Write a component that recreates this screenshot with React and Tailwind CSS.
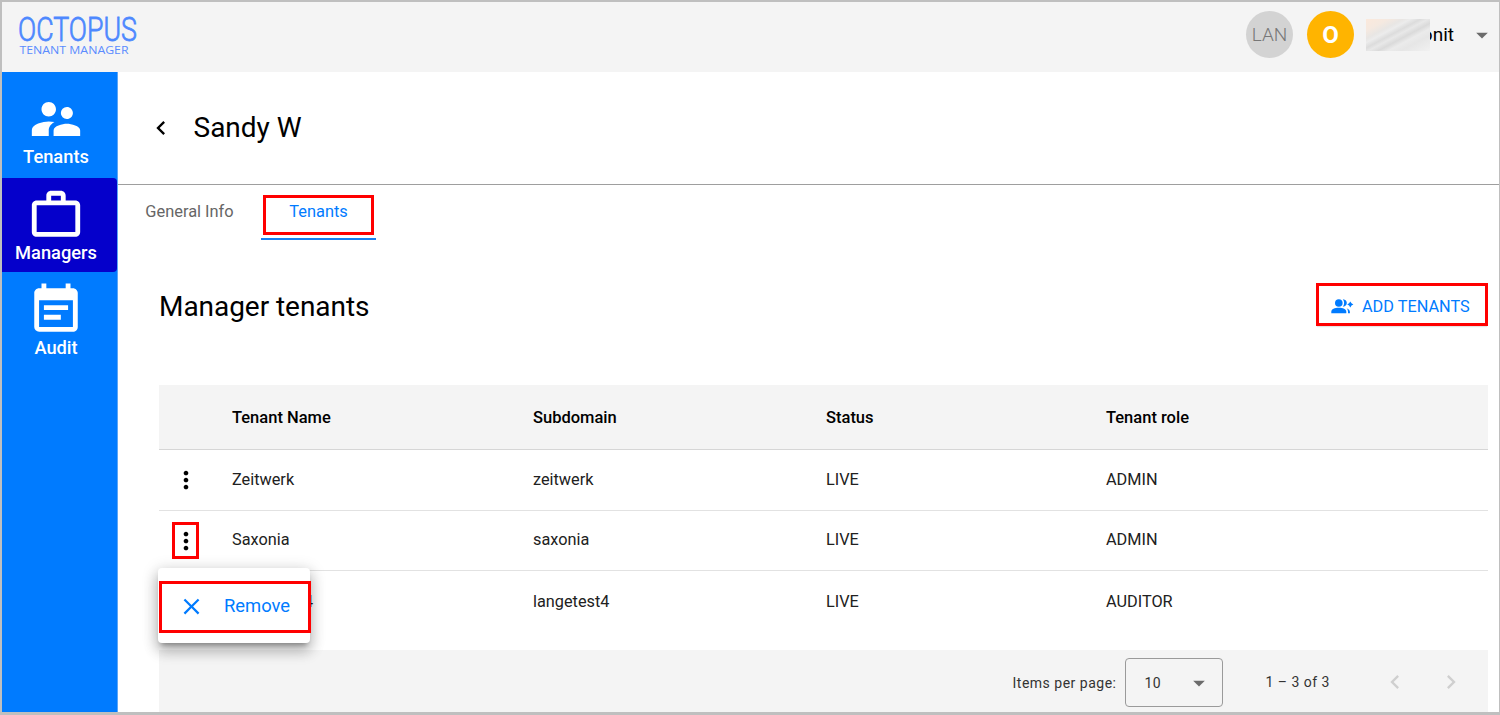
import React, { useState } from "react";
import {
  MdSupervisorAccount,
  MdWorkOutline,
  MdEventNote,
  MdChevronLeft,
  MdChevronRight,
  MdMoreVert,
  MdClose,
  MdArrowDropDown,
} from "react-icons/md";

const tenants = [
  { name: "Zeitwerk", subdomain: "zeitwerk", status: "LIVE", role: "ADMIN" },
  { name: "Saxonia", subdomain: "saxonia", status: "LIVE", role: "ADMIN" },
  { name: "Langetest4", subdomain: "langetest4", status: "LIVE", role: "AUDITOR" },
];

const Logo = () => (
  <svg width="124" height="44" viewBox="0 0 124 44" className="block overflow-visible">
    <text
      x="-1"
      y="26"
      fontFamily="Roboto"
      fontSize="34"
      fontWeight="300"
      fill="#4d88ff"
      stroke="#4d88ff"
      strokeWidth="0.8"
      textLength="119"
      lengthAdjust="spacingAndGlyphs"
    >
      OCTOPUS
    </text>
    <text
      x="0.5"
      y="39"
      fontFamily="Open Sans"
      fontSize="11.5"
      fill="#5b8cff"
      textLength="109"
      lengthAdjust="spacingAndGlyphs"
    >
      TENANT MANAGER
    </text>
  </svg>
);

const AddUserIcon = () => (
  <svg width="23" height="16" viewBox="0 0 23 16" fill="#007bff" className="block">
    <circle cx="7.8" cy="4" r="3.8" />
    <path d="M0.3 14.300v-1.600c0-2.600 3.400-3.900 7.500-3.900s7.500 1.300 7.500 3.900v1.600z" />
    <path d="M11.800 0.300c3 .3 4 2 4 3.700s-1 3.400-4 3.700c1.800-2 1.800-5.400 0-7.400z" />
    <path d="M15.600 9.200c2.100.8 3.300 2 3.300 3.700v1.400h-1.900v-1.400c0-1.500-.4-2.700-1.400-3.700z" />
    <path d="M19.300 2.400l1.200 1.800 1.900 1.200-1.900 1.200-1.200 1.800-1.200-1.800-1.900-1.200 1.900-1.200z" />
  </svg>
);

const Header = () => (
  <header className="flex h-[70px] shrink-0 items-center justify-between bg-[#f4f4f4] pl-[17px] pr-[3px]">
    <Logo />
    <div className="flex items-center pb-[5px]">
      <div className="flex h-[47px] w-[47px] items-center justify-center rounded-full bg-[#d3d3d3] pt-[2px] text-[19px] font-light text-[#777]">
        LAN
      </div>
      <div className="ml-[14px] flex h-[47px] w-[47px] items-center justify-center rounded-full bg-[#ffb400] pt-px text-[24px] font-bold text-white">
        O
      </div>
      <div className="relative ml-3 flex h-8 w-[88px] items-center justify-end pt-[2px] text-[19px] text-black">
        <span>onit</span>
        <span className="absolute left-0 top-0 h-8 w-16 bg-[linear-gradient(152deg,#fbe9dc_0%,#f5e9e0_18%,#e8e6e4_30%,#ececec_36%,#dcdcdc_44%,#e8e8e8_50%,#dadada_58%,#ebebeb_66%,#e6e6e6_76%,#f1f1f1_100%)]" />
      </div>
      <MdArrowDropDown className="ml-[14px] h-7 w-7 text-[#6b6b6b]" />
    </div>
  </header>
);

const Sidebar = () => (
  <nav className="flex w-[116px] shrink-0 flex-col border-r border-[#5ba6f7] bg-[#007bff] text-[18.3px] font-medium leading-[22px] text-white">
    <a className="flex h-[106px] flex-col items-center pr-[7px] pt-[18px]">
      <MdSupervisorAccount className="h-[58px] w-[58px] shrink-0" />
      <span className="-mt-[2px]">Tenants</span>
    </a>
    <a className="flex h-[94px] flex-col items-center rounded-r bg-[#0500cb] pr-[7px] pt-[8px]">
      <MdWorkOutline className="h-[58px] w-[58px] shrink-0" />
      <span className="-mt-[2px]">Managers</span>
    </a>
    <a className="flex h-[96px] flex-col items-center pr-[7px] pt-[9px]">
      <MdEventNote className="h-[58px] w-[58px] shrink-0" />
      <span className="-mt-[2px]">Audit</span>
    </a>
  </nav>
);

const RowMenu = () => (
  <div className="absolute left-[-14px] top-[46px] z-10 flex h-[75px] w-[152px] items-center rounded bg-white shadow-[0_5px_5px_-3px_rgba(0,0,0,0.3),0_8px_14px_1px_rgba(0,0,0,0.2),0_3px_16px_2px_rgba(0,0,0,0.14)]">
    <button className="ml-[1px] mt-[3px] flex h-[52px] w-[152px] shrink-0 items-center border-[3px] border-[#ff0000] pb-[2px] pl-[16px] text-[18.4px] text-[#007bff]">
      <MdClose className="h-[27px] w-[27px]" />
      <span className="ml-[19px]">Remove</span>
    </button>
  </div>
);

const TenantsTable = () => {
  const [openRow] = useState(1);

  return (
    <div className="text-[16.3px] text-[#212121]">
      <div className="grid h-[65px] grid-cols-[73px_301px_293px_280px_1fr] items-center border-b border-[#d6d6d6] bg-[#f4f4f4] pt-[2px] text-[16.5px] font-medium text-black">
        <span />
        <span>Tenant Name</span>
        <span>Subdomain</span>
        <span>Status</span>
        <span>Tenant role</span>
      </div>
      {tenants.map((tenant, i) => (
        <div
          key={tenant.name}
          className={
            i === tenants.length - 1
              ? "grid h-[79px] grid-cols-[73px_301px_293px_280px_1fr] items-center pb-[17px]"
              : "grid h-[60.5px] grid-cols-[73px_301px_293px_280px_1fr] items-center border-b border-[#e2e2e2] pt-[0.6px]"
          }
        >
          <div className="relative ml-[13px] w-[27px]">
            <button
              className={
                openRow === i
                  ? "flex h-[37px] w-[27px] items-center justify-center border-[3px] border-[#ff0000] text-black"
                  : "flex h-[37px] w-[27px] items-center justify-center text-black"
              }
            >
              <MdMoreVert className="h-7 w-7 shrink-0" />
            </button>
            {openRow === i && <RowMenu />}
          </div>
          <span>{tenant.name}</span>
          <span>{tenant.subdomain}</span>
          <span>{tenant.status}</span>
          <span>{tenant.role}</span>
        </div>
      ))}
    </div>
  );
};

const Paginator = () => (
  <div className="flex h-[62px] items-center justify-end bg-[#f4f4f4] pr-[23px] text-[14px] tracking-[0.5px] text-[#333]">
    <span className="mt-[4px]">Items per page:</span>
    <div className="ml-[9px] mt-[2px] flex h-[49px] w-[98px] items-center justify-between rounded border border-[#9a9a9a] pl-[18px] pr-[9px]">
      <span className="mt-[2px]">10</span>
      <MdArrowDropDown className="mt-px h-7 w-7 text-[#6b6b6b]" />
    </div>
    <span className="ml-[42px] mt-[2px]">1 – 3 of 3</span>
    <MdChevronLeft className="ml-[51px] mt-[2px] h-7 w-7 text-[#cfcfcf]" />
    <MdChevronRight className="ml-[28px] mt-[2px] h-7 w-7 text-[#cfcfcf]" />
  </div>
);

const App = () => {
  return (
    <div className="flex h-[715px] w-[1500px] flex-col overflow-hidden border-b-[3px] border-l-2 border-r border-t-2 border-[#bfbfbf] bg-white font-[Roboto,sans-serif]">
      <Header />
      <div className="flex min-h-0 flex-1">
        <Sidebar />
        <main className="flex flex-1 flex-col">
          <div className="flex h-[113px] shrink-0 items-center border-b border-[#9e9e9e] pl-[29px] text-black">
            <MdChevronLeft className="h-7 w-7" />
            <h1 className="ml-[18.5px] text-[28px]">Sandy W</h1>
          </div>

          <div className="flex h-[55px] shrink-0 text-[16.4px]">
            <button className="ml-[27px] h-[54px] w-[89px] whitespace-nowrap pt-px text-[#666]">
              General Info
            </button>
            <div className="ml-[27px] flex w-[115px] flex-col items-center border-b-2 border-[#1a80f0] pt-[10px]">
              <button className="h-10 w-[111px] border-[3px] border-[#ff0000] pb-[5px] text-[#007bff]">
                Tenants
              </button>
            </div>
          </div>

          <div className="flex flex-1 flex-col pl-[41px] pr-[11px]">
            <div className="flex h-[145px] shrink-0 items-start justify-between pt-[43px]">
              <h2 className="mt-[3px] text-[28px] leading-[42px] tracking-[-0.05px] text-black">
                Manager tenants
              </h2>
              <button className="flex h-[43px] w-[172px] items-center border-[3px] border-[#ff0000] pl-[12px] pt-[4px] text-[16.3px] text-[#007bff] shadow-[0_2px_1px_-1px_rgba(0,0,0,0.1)]">
                <AddUserIcon />
                <span className="ml-[8px] whitespace-nowrap pt-[2px]">ADD TENANTS</span>
              </button>
            </div>
            <TenantsTable />
            <Paginator />
          </div>
        </main>
      </div>
    </div>
  );
};

export default App;
